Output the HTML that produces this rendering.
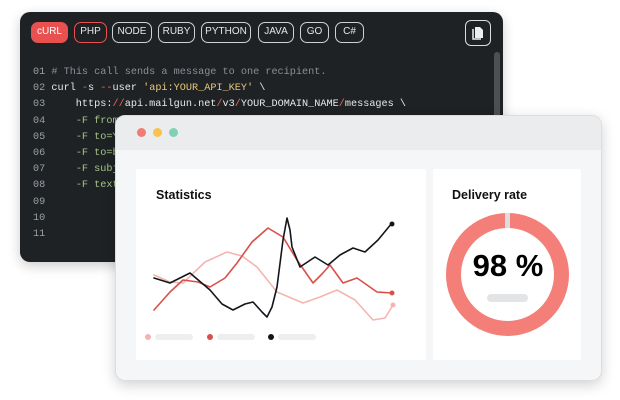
<!DOCTYPE html>
<html><head><meta charset="utf-8"><style>
*{margin:0;padding:0;box-sizing:border-box}
body{width:620px;height:400px;background:#fff;position:relative;overflow:hidden;font-family:"Liberation Sans",sans-serif}
.code{position:absolute;left:20px;top:12px;width:483px;height:250px;background:#1e2225;border-radius:10px;box-shadow:0 4px 12px rgba(0,0,0,.2)}
.tab{position:absolute;top:10px;height:21px;border:1.5px solid #cfd2d4;border-radius:7px;color:#e6e6e6;font-size:10px;line-height:18px;text-align:center}
.copy{position:absolute;left:445px;top:8px;width:26px;height:26px;border:1.5px solid #ddd;border-radius:6px}
.scroll{position:absolute;left:474px;top:40px;width:6px;height:190px;background:#4a5054;border-radius:3px}
pre{position:absolute;left:13px;top:53px;font-family:"Liberation Mono",monospace;font-size:10.2px;line-height:16.2px;color:#e8e8e8}
.n{color:#9aa0a4}.c{color:#8a8f93}.s{color:#e8c77a}.g{color:#a6c58a}.r{color:#e86a5f}
.win{position:absolute;left:115px;top:115px;width:487px;height:266px;background:#f5f6f7;border-radius:10px;border:1px solid #ddd;box-shadow:0 4px 14px rgba(0,0,0,.18);overflow:hidden}
.bar{height:34px;background:#ebeced}
.dot{position:absolute;top:12px;width:9px;height:9px;border-radius:50%}
.card{position:absolute;top:53px;height:191px;background:#fff;border-radius:2px}
.h{position:absolute;font-size:12.5px;font-weight:bold;color:#111}
</style></head><body>
<div class="code">
<div class="tab" style="left:11px;width:37px;background:#e8514f;border-color:#e8514f;color:#fff">cURL</div>
<div class="tab" style="left:54px;width:33px;border-color:#e8514f">PHP</div>
<div class="tab" style="left:92px;width:40px">NODE</div>
<div class="tab" style="left:138px;width:37px">RUBY</div>
<div class="tab" style="left:181px;width:50px">PYTHON</div>
<div class="tab" style="left:238px;width:36px">JAVA</div>
<div class="tab" style="left:280px;width:29px">GO</div>
<div class="tab" style="left:315px;width:29px">C#</div>
<div class="copy"><svg width="24" height="24" viewBox="0 0 24 24"><path d="M9 6h5l3 3v8H9z" fill="#eee"/><path d="M7 8v10h8" stroke="#eee" stroke-width="1.5" fill="none"/></svg></div>
<div class="scroll"></div>
<pre><span class="n">01</span> <span class="c"># This call sends a message to one recipient.</span>
<span class="n">02</span> curl <span class="r">-</span>s <span class="r">--</span>user <span class="s">'api:YOUR_API_KEY'</span> \
<span class="n">03</span>     https:<span class="r">//</span>api.mailgun.net<span class="r">/</span>v3<span class="r">/</span>YOUR_DOMAIN_NAME<span class="r">/</span>messages \
<span class="n">04</span>     <span class="g">-F from</span>
<span class="n">05</span>     <span class="g">-F to=Y</span>
<span class="n">06</span>     <span class="g">-F to=b</span>
<span class="n">07</span>     <span class="g">-F subj</span>
<span class="n">08</span>     <span class="g">-F text</span>
<span class="n">09</span>
<span class="n">10</span>
<span class="n">11</span></pre>
</div>
<div class="win">
<div class="bar"></div>
<div class="dot" style="left:21px;background:#f47a74"></div>
<div class="dot" style="left:37px;background:#f8c24e"></div>
<div class="dot" style="left:53px;background:#7ed1b4"></div>
<div class="card" style="left:20px;width:290px"></div>
<div class="card" style="left:317px;width:148px"></div>
<div class="h" style="left:40px;top:72px">Statistics</div>
<div class="h" style="left:336px;top:72px">Delivery rate</div>
<div style="position:absolute;left:330px;top:97px;width:123px;height:123px;border-radius:50%;border:15px solid #f47e78"></div>
<div style="position:absolute;left:389px;top:97px;width:5px;height:15px;background:#ddd"></div>
<div style="position:absolute;left:335px;top:132px;width:114px;text-align:center;font-size:31px;font-weight:bold;color:#000">98 %</div>
<div style="position:absolute;left:371px;top:178px;width:41px;height:8px;border-radius:4px;background:#e2e4e5"></div>
</div>
<svg style="position:absolute;left:0;top:0" width="620" height="400" fill="none" stroke-width="1.6" stroke-linejoin="round" stroke-linecap="round">
<polyline stroke="#f4b5b0" points="154,275 170,282 183,283 205,262 227,252 242,256 257,267 277,292 303,303 320,297 337,290 355,300 373,320 385,318 393,305"/>
<polyline stroke="#d9504a" points="154,310 170,292 183,280 198,282 210,287 225,278 237,263 252,242 268,228 283,237 297,260 313,283 322,274 330,265 343,283 357,278 377,292 392,293"/>
<polyline stroke="#15161c" points="154,278 170,283 190,273 210,290 222,304 233,310 245,304 253,302 262,312 267,317 272,307 277,287 283,240 287,218 290,230 292,247 300,267 315,257 328,265 340,255 353,248 365,252 378,240 392,223"/>
<circle cx="392" cy="224" r="2.5" fill="#15161c"/><circle cx="392" cy="293" r="2.5" fill="#d9504a"/><circle cx="393" cy="305" r="2.5" fill="#f4b5b0"/>
<circle cx="148" cy="337" r="3" fill="#f4b5b0"/><rect x="155" y="334" width="38" height="6" rx="3" fill="#eceeef"/>
<circle cx="210" cy="337" r="3" fill="#d9504a"/><rect x="217" y="334" width="38" height="6" rx="3" fill="#eceeef"/>
<circle cx="271" cy="337" r="3" fill="#15161c"/><rect x="278" y="334" width="38" height="6" rx="3" fill="#eceeef"/>
</svg>
</body></html>
